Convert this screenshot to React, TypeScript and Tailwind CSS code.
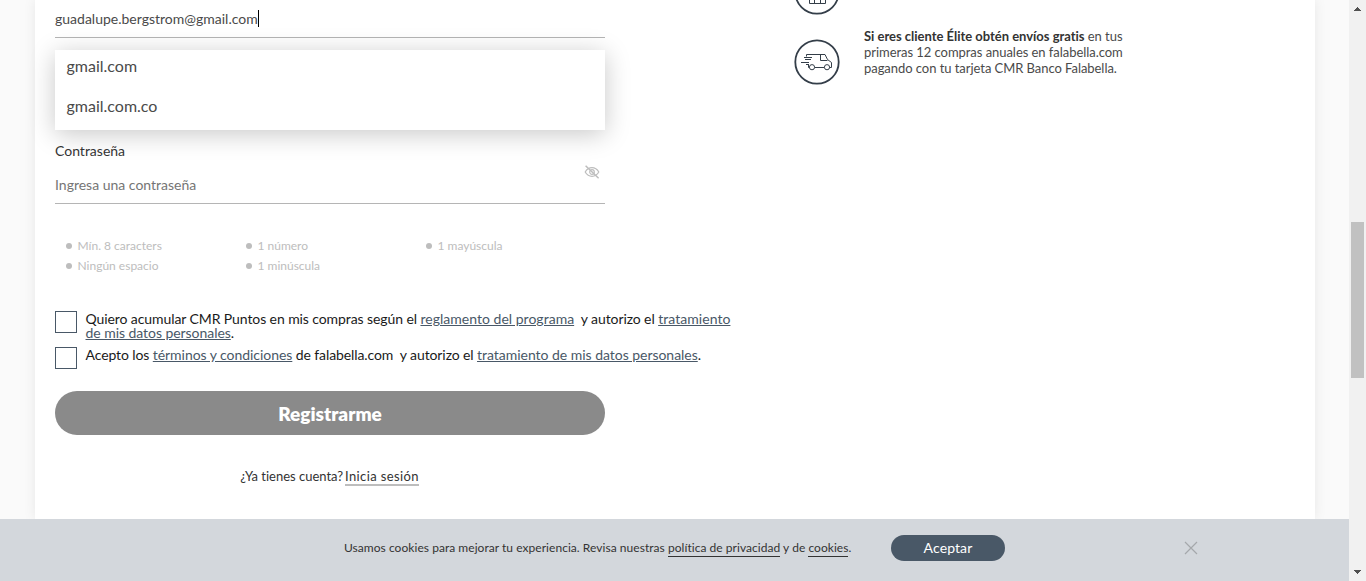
import React from 'react';

function Requirement({ children }: { children: React.ReactNode }) {
  return (
    <li className="flex h-5 w-[180px] items-center whitespace-nowrap text-[12px] text-[#bdbdbd]">
      <span className="mr-[6px] size-[6px] rounded-full bg-[#bdbdbd]" />
      {children}
    </li>
  );
}

function TermsLink({ children }: { children: React.ReactNode }) {
  return <a href="#" className="text-[#495867] underline">{children}</a>;
}

function Checkbox() {
  return <span role="checkbox" aria-checked="false" className="size-[22px] shrink-0 border border-[#495867]" />;
}

function HiddenEye() {
  return (
    <svg width="16" height="16" viewBox="0 0 16 16" fill="none" stroke="#bdbdbd" strokeWidth="1.2">
      <path d="M1.2 8C4.6 2.2 11.4 2.2 14.8 8C11.4 13.8 4.6 13.8 1.2 8Z" />
      <circle cx="8" cy="8" r="2.3" />
      <path d="M1.6 1.8L14.6 14.2" strokeWidth="1.5" />
    </svg>
  );
}

function Van() {
  return (
    <svg width="46" height="46" viewBox="0 0 46 46" fill="none" stroke="#343e49" strokeWidth="1">
      <circle cx="23" cy="23" r="21.7" strokeWidth="1.8" />
      <path d="M12.5 17.5V15.5H31L33.5 20.5L37.5 23.5V28.5H35.5M30 28.5H21M15.5 28.5H14.5V25" />
      <path d="M26.5 16V21.5H33.5M10 18.5H18M11 20.5H17M7 23.5H15M12 25.5H14" />
      <circle cx="18" cy="28.2" r="2.6" />
      <circle cx="33" cy="28.2" r="2.6" />
    </svg>
  );
}

function Gift() {
  return (
    <svg width="46" height="15" viewBox="0 31 46 15" fill="none" stroke="#343e49" strokeWidth="1">
      <circle cx="23" cy="23" r="21.7" strokeWidth="1.8" />
      <path d="M15.5 28V34.5H31.5V28M20.5 28V34.5M26.5 28V34.5" />
    </svg>
  );
}

function RegisterForm() {
  return (
    <form className="w-[700px] shrink-0">
      <div className="flex h-[38px] w-[550px] items-center border-b border-[#b5b5b5] text-[14px] text-[#4a4a4a]">
        <span>guadalupe.bergstrom@gmail.com</span>
        <span className="h-[17px] w-px bg-black" />
      </div>
      <ul className="mt-3 h-20 w-[550px] bg-white pl-[11.5px] text-[16px] text-[#4a4a4a] shadow-[0_4px_24px_rgba(0,0,0,0.22)]">
        <li className="h-10 leading-[32px]">gmail.com</li>
        <li className="h-10 leading-[32px]">gmail.com.co</li>
      </ul>
      <div className="w-[550px] border-b border-[#b5b5b5]">
        <label className="block h-[30px] pt-[12px] text-[14px] leading-[18px] text-[#333333]">Contraseña</label>
        <div className="flex h-[43px] justify-between pr-[5px]">
          <span className="pt-[15px] text-[14px] leading-[20px] text-[#757575]">Ingresa una contraseña</span>
          <span className="pt-[4px]"><HiddenEye /></span>
        </div>
      </div>
      <ul className="ml-[10.5px] mt-8 flex h-10 w-[540px] flex-wrap">
        <Requirement>Mín. 8 caracters</Requirement>
        <Requirement>1 número</Requirement>
        <Requirement>1 mayúscula</Requirement>
        <Requirement>Ningún espacio</Requirement>
        <Requirement>1 minúscula</Requirement>
      </ul>
      <div className="mt-[35px] flex h-9 gap-[8.5px] text-[14px] leading-[14px] text-[#1a1a1a]">
        <Checkbox />
        <p className="whitespace-nowrap pt-px tracking-[-0.09px]">
          Quiero acumular CMR Puntos en mis compras según el <span className="tracking-[0.02px]"><TermsLink>reglamento del programa</TermsLink></span>&nbsp; y autorizo el <span className="tracking-[0.05px]"><TermsLink>tratamiento</TermsLink></span><br />
          <span className="tracking-[-0.05px]"><TermsLink>de mis datos personales</TermsLink></span>.
        </p>
      </div>
      <div className="flex h-11 gap-[8.5px] text-[14px] leading-[14px] text-[#1a1a1a]">
        <Checkbox />
        <p className="whitespace-nowrap pt-px tracking-[-0.1px]">
          Acepto los <span className="tracking-[-0.05px]"><TermsLink>términos y condiciones</TermsLink></span> de falabella.com&nbsp; y autorizo el <span className="tracking-[-0.03px]"><TermsLink>tratamiento de mis datos personales</TermsLink></span>.
        </p>
      </div>
      <button type="button" className="block h-11 w-[550px] rounded-full bg-[#8a8a8a] pt-[2px] text-[19px] font-extrabold text-white">
        Registrarme
      </button>
      <p className="mt-[33px] flex w-[549px] justify-center whitespace-nowrap text-[13px] leading-[17px] text-[#333333]">
        <span className="mr-[2px] tracking-[-0.01px]">¿Ya tienes cuenta?</span>
        <a href="#" className="h-[18px] border-b-2 border-[#bdbdbd] tracking-[0.38px]">Inicia sesión</a>
      </p>
    </form>
  );
}

function Benefits() {
  return (
    <aside className="ml-[39px]">
      <Gift />
      <div className="mt-6 flex">
        <Van />
        <p className="ml-6 mt-[-11px] whitespace-nowrap text-[13px] leading-4 tracking-[-0.05px] text-[#4a4a4a]">
          <b className="tracking-[-0.02px] text-[#333333]">Si eres cliente Élite obtén envíos gratis</b> en tus<br />
          primeras 12 compras anuales en falabella.com<br />
          pagando con tu tarjeta CMR Banco Falabella.
        </p>
      </div>
    </aside>
  );
}

function CookieBar() {
  return (
    <footer className="flex h-[62px] shrink-0 items-center bg-[#d3d7dc] pb-[4px] pl-[344px]">
      <p className="w-[547px] whitespace-nowrap text-[12px] leading-[16px] tracking-[0.045px] text-[#333333]">
        Usamos cookies para mejorar tu experiencia. Revisa nuestras <a href="#" className="border-b border-[#333333] pb-px">política de privacidad</a> y de <a href="#" className="border-b border-[#333333] pb-px">cookies</a>.
      </p>
      <button type="button" className="h-[26px] w-[114px] rounded-full bg-[#495867] pb-px text-[14px] tracking-[0.1px] text-white">Aceptar</button>
      <svg className="ml-[179px]" width="14" height="14" viewBox="0 0 14 14" stroke="#a5a8ab" strokeWidth="1.2">
        <path d="M1 1L13 13M13 1L1 13" />
      </svg>
    </footer>
  );
}

function Scrollbar() {
  return (
    <div className="flex h-full w-[17px] flex-col items-center bg-[#f1f1f1]">
      <svg width="17" height="17" fill="#505050" shapeRendering="crispEdges"><path d="M5 11L8.5 7L12 11Z" /></svg>
      <div className="mt-[205px] h-[156px] w-[13px] bg-[#c1c1c1]" />
      <svg className="mt-auto" width="17" height="17" fill="#505050" shapeRendering="crispEdges"><path d="M5 6L8.5 10L12 6Z" /></svg>
    </div>
  );
}

export default function App() {
  return (
    <div className="flex h-[581px] w-[1366px] overflow-hidden font-['Lato',sans-serif]">
      <div className="flex w-[1349px] flex-col bg-[#fafafa]">
        <main className="h-[519px] overflow-hidden pl-[35px] pr-[34px]">
          <div className="flex h-full w-[1280px] bg-white pl-5 shadow-[0_0_12px_rgba(0,0,0,0.08)]">
            <RegisterForm />
            <Benefits />
          </div>
        </main>
        <CookieBar />
      </div>
      <Scrollbar />
    </div>
  );
}
